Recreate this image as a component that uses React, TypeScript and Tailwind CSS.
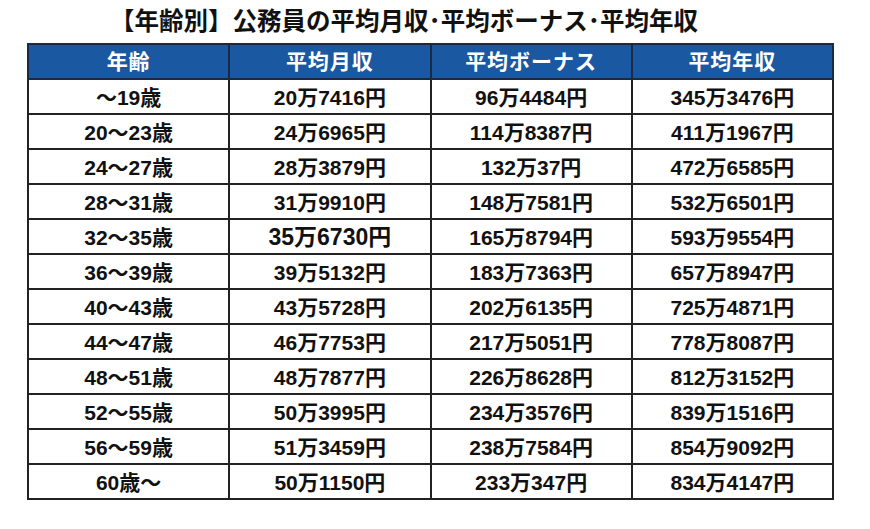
const rows: [string, string, string, string][] = [
  ["～19歳", "20万7416円", "96万4484円", "345万3476円"],
  ["20～23歳", "24万6965円", "114万8387円", "411万1967円"],
  ["24～27歳", "28万3879円", "132万37円", "472万6585円"],
  ["28～31歳", "31万9910円", "148万7581円", "532万6501円"],
  ["32～35歳", "35万6730円", "165万8794円", "593万9554円"],
  ["36～39歳", "39万5132円", "183万7363円", "657万8947円"],
  ["40～43歳", "43万5728円", "202万6135円", "725万4871円"],
  ["44～47歳", "46万7753円", "217万5051円", "778万8087円"],
  ["48～51歳", "48万7877円", "226万8628円", "812万3152円"],
  ["52～55歳", "50万3995円", "234万3576円", "839万1516円"],
  ["56～59歳", "51万3459円", "238万7584円", "854万9092円"],
  ["60歳～", "50万1150円", "233万347円", "834万4147円"],
]

const headers = ["年齢", "平均月収", "平均ボーナス", "平均年収"]

export default function App() {
  return (
    <div
      className="w-[870px] h-[529px] bg-white text-[#111]"
      style={{ fontFamily: '"Liberation Sans", "Noto Sans CJK JP", sans-serif' }}
    >
      <div className="pt-[6px] pl-[110px] h-[43px] text-[24.5px] leading-[32px] font-bold">
        【年齢別】公務員の平均月収･平均ボーナス･平均年収
      </div>
      <table className="ml-[27px] w-[807px] table-fixed border-collapse">
        <thead>
          <tr className="h-[35px] bg-[#1b58a2]">
            {headers.map((h) => (
              <th
                key={h}
                className="border-2 border-[#1a2a44] p-0 text-center text-[21px] font-bold tracking-[1px] text-white"
              >
                {h}
              </th>
            ))}
          </tr>
        </thead>
        <tbody>
          {rows.map((r, i) => (
            <tr key={r[0]} className="h-[35px]">
              {r.map((c, j) => (
                <td
                  key={j}
                  className={
                    "border-2 border-[#222] p-0 pt-[2px] text-center font-bold leading-none " +
                    (i === 4 && j === 1 ? "text-[23px]" : "text-[21px]")
                  }
                >
                  {c}
                </td>
              ))}
            </tr>
          ))}
        </tbody>
      </table>
    </div>
  )
}
